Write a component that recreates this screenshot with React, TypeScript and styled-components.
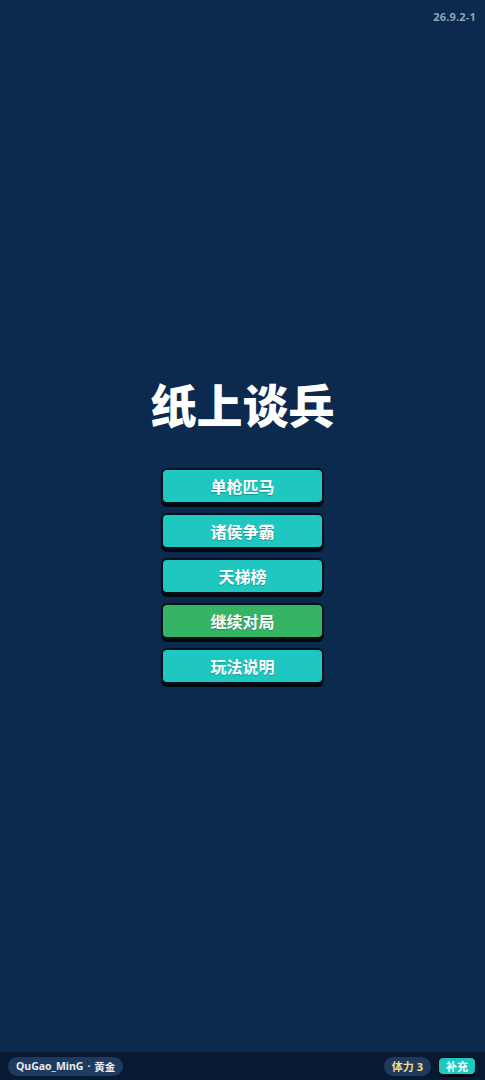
import * as React from 'react';
import styled, { createGlobalStyle } from 'styled-components';

const GlobalStyle = createGlobalStyle`
  html, body {
    margin: 0;
    padding: 0;
    background: #0b2a4d;
  }
  * {
    box-sizing: border-box;
  }
`;

const FONT = `"Noto Sans", "Noto Sans CJK SC", sans-serif`;

const Page = styled.div`
  position: relative;
  width: 100%;
  height: 1080px;
  display: flex;
  flex-direction: column;
  background: #0b2a4d;
  font-family: ${FONT};
  color: #fff;
`;

const Version = styled.div`
  position: absolute;
  top: 9px;
  right: 9px;
  font-size: 11px;
  font-weight: 700;
  color: #94a0b2;
  letter-spacing: 0.2px;
`;

const Main = styled.main`
  flex: 1;
  display: flex;
  flex-direction: column;
  align-items: center;
  justify-content: center;
  padding-top: 14px;
`;

const Title = styled.h1`
  margin: 0 0 40px;
  font-size: 46px;
  line-height: 1;
  font-weight: 900;
  letter-spacing: 0;
  color: #fff;
`;

const Menu = styled.nav`
  display: flex;
  flex-direction: column;
  gap: 9px;
`;

const MenuButton = styled.button<{ $tone?: 'teal' | 'green' }>`
  width: 163px;
  height: 36px;
  border: 2px solid #05101d;
  border-radius: 6px;
  background: ${p => (p.$tone === 'green' ? '#36b466' : '#1ec8c1')};
  box-shadow: 0 3px 0 #03090f;
  color: #fff;
  font-family: ${FONT};
  font-size: 16px;
  font-weight: 700;
  text-shadow: 0 1px 1px rgba(0, 0, 0, 0.25);
  cursor: pointer;
  padding: 0;
`;

const BottomBar = styled.footer`
  height: 28px;
  background: #071a31;
  display: flex;
  align-items: center;
  justify-content: space-between;
  padding: 0 9px 0 8px;
`;

const NamePill = styled.div`
  height: 19px;
  padding: 0 8px;
  border-radius: 10px;
  background: #1e3a5e;
  display: flex;
  align-items: center;
  font-size: 10.5px;
  font-weight: 700;
  color: #e6ecf3;
`;

const Dot = styled.span`
  margin: 0 4px;
`;

const Right = styled.div`
  display: flex;
  align-items: center;
  gap: 7px;
`;

const StaminaPill = styled.div`
  height: 19px;
  padding: 0 8px;
  border-radius: 10px;
  background: #1e3a5e;
  display: flex;
  align-items: center;
  font-size: 11px;
  font-weight: 700;
  color: #f3dd8a;
`;

const RefillButton = styled.button`
  height: 18px;
  padding: 0 7px;
  border: 1px solid #03090f;
  border-radius: 5px;
  background: #1ec8c1;
  box-shadow: 0 2px 0 #03090f;
  color: #fff;
  font-family: ${FONT};
  font-size: 11px;
  font-weight: 700;
  cursor: pointer;
`;

const items: { label: string; tone?: 'teal' | 'green' }[] = [
  { label: '单枪匹马' },
  { label: '诸侯争霸' },
  { label: '天梯榜' },
  { label: '继续对局', tone: 'green' },
  { label: '玩法说明' },
];

export default function App() {
  return (
    <Page>
      <GlobalStyle />
      <Version>26.9.2-1</Version>
      <Main>
        <Title>纸上谈兵</Title>
        <Menu>
          {items.map(item => (
            <MenuButton key={item.label} $tone={item.tone}>
              {item.label}
            </MenuButton>
          ))}
        </Menu>
      </Main>
      <BottomBar>
        <NamePill>
          QuGao_MinG<Dot>·</Dot>黄金
        </NamePill>
        <Right>
          <StaminaPill>体力 3</StaminaPill>
          <RefillButton>补充</RefillButton>
        </Right>
      </BottomBar>
    </Page>
  );
}
